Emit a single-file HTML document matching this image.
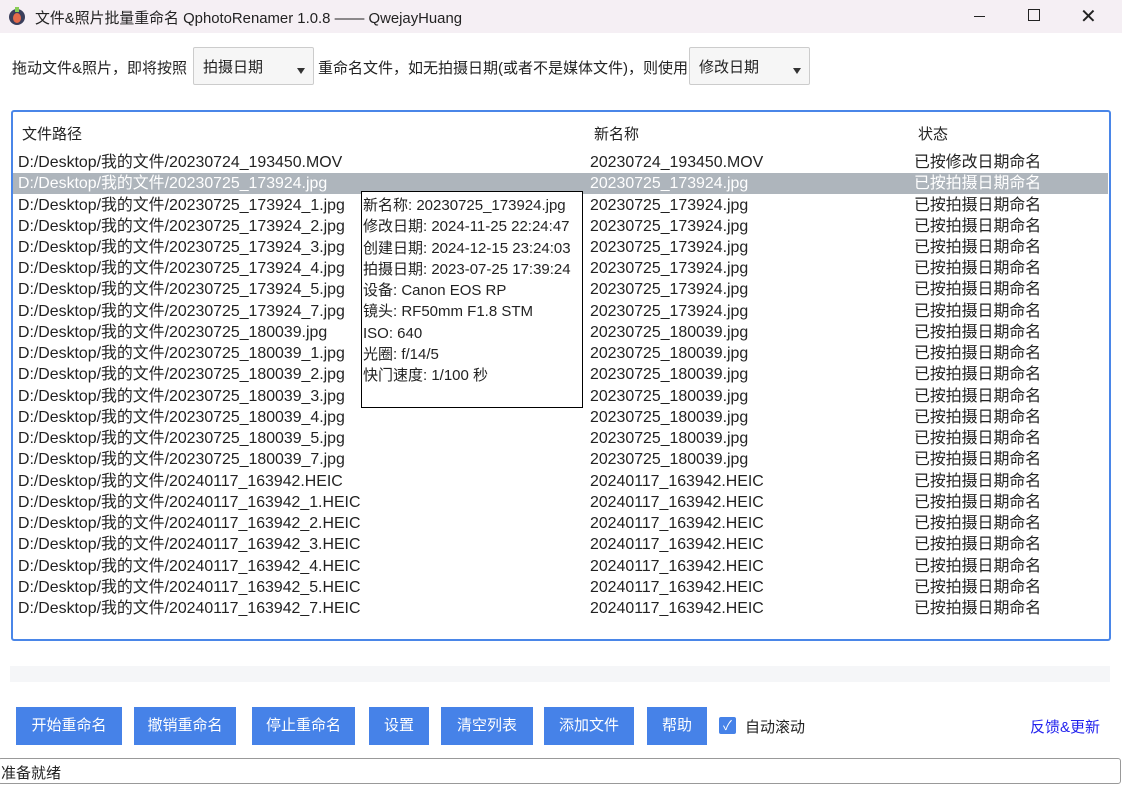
<!DOCTYPE html><html><head><meta charset="utf-8"><style>
*{margin:0;padding:0;box-sizing:border-box}
body{width:1122px;height:785px;background:#fff;font-family:"Liberation Sans","Noto Sans CJK SC",sans-serif;font-size:15px;color:#222;position:relative;overflow:hidden}
.a{position:absolute;white-space:nowrap}
.title{left:0;top:0;width:1122px;height:33px;background:#f5eff4}
.combo{position:absolute;height:38px;border:1px solid #ccc;border-radius:2px;background:#f6f6f6;padding:8px 9px;font-size:15px}
.combo:after{content:"";position:absolute;right:8px;bottom:10px;border:4px solid transparent;border-top:6px solid #333;border-bottom:0}
.table{left:11px;top:110px;width:1100px;height:531px;border:2px solid #4a86e8;border-radius:3px}
.row{position:absolute;left:13px;width:1095px;height:21px;line-height:21px;font-size:15.9px}
.row span{position:absolute}
.sel{background:#aeb5bc;color:#fff}
.tip{left:361px;top:191px;width:222px;height:217px;border:1px solid #000;background:#fff;padding:3px 1px;font-size:15px;line-height:21.3px}
.btn{position:absolute;top:707px;height:38px;background:#4682e8;color:#fff;font-size:15px;text-align:center;line-height:38px}
</style></head><body>
<div class="a title"></div>
<svg class="a" style="left:8px;top:6px" width="18" height="20"><ellipse cx="9" cy="11" rx="8" ry="8" fill="#3b3f5c"/><ellipse cx="9" cy="12" rx="4" ry="5" fill="#e46a4a"/><rect x="7" y="1" width="4" height="5" fill="#8c5"/></svg>
<div class="a" style="left:35px;top:7px;font-size:14.9px">文件&amp;照片批量重命名 QphotoRenamer 1.0.8 —— QwejayHuang</div>
<div class="a" style="left:974px;top:16px;width:11px;height:1px;background:#222"></div>
<div class="a" style="left:1028px;top:9px;width:12px;height:12px;border:1.5px solid #222"></div>
<div class="a" style="left:1080px;top:4px;font-size:20px;color:#222">✕</div>
<div class="a" style="left:12px;top:57px">拖动文件&amp;照片，即将按照</div>
<div class="combo" style="left:193px;top:47px;width:121px">拍摄日期</div>
<div class="a" style="left:318px;top:57px">重命名文件，如无拍摄日期(或者不是媒体文件)，则使用</div>
<div class="combo" style="left:689px;top:47px;width:121px">修改日期</div>
<div class="a table"></div>
<div class="a" style="left:22px;top:123px">文件路径</div>
<div class="a" style="left:594px;top:123px">新名称</div>
<div class="a" style="left:918px;top:123px">状态</div>
<div id="rows"></div>
<script>
var n=["20230724_193450.MOV","20230725_173924.jpg","20230725_173924_1.jpg","20230725_173924_2.jpg","20230725_173924_3.jpg","20230725_173924_4.jpg","20230725_173924_5.jpg","20230725_173924_7.jpg","20230725_180039.jpg","20230725_180039_1.jpg","20230725_180039_2.jpg","20230725_180039_3.jpg","20230725_180039_4.jpg","20230725_180039_5.jpg","20230725_180039_7.jpg","20240117_163942.HEIC","20240117_163942_1.HEIC","20240117_163942_2.HEIC","20240117_163942_3.HEIC","20240117_163942_4.HEIC","20240117_163942_5.HEIC","20240117_163942_7.HEIC"];
var h="";n.forEach(function(f,i){var t=(152+i*21.24).toFixed(1);var nn=f.replace(/_\d\./,".");if(i==0)nn=f;
h+='<div class="row'+(i==1?' sel':'')+'" style="top:'+t+'px"><span style="left:5px">D:/Desktop/我的文件/'+f+'</span><span style="left:577px">'+nn+'</span><span style="left:901px">'+(i==0?'已按修改日期命名':'已按拍摄日期命名')+'</span></div>';});
document.getElementById('rows').outerHTML=h;
</script>
<div class="a tip">新名称: 20230725_173924.jpg<br>修改日期: 2024-11-25 22:24:47<br>创建日期: 2024-12-15 23:24:03<br>拍摄日期: 2023-07-25 17:39:24<br>设备: Canon EOS RP<br>镜头: RF50mm F1.8 STM<br>ISO: 640<br>光圈: f/14/5<br>快门速度: 1/100 秒</div>
<div class="a" style="left:10px;top:666px;width:1100px;height:16px;background:#f5f6f8"></div>
<div class="btn" style="left:16px;width:106px">开始重命名</div>
<div class="btn" style="left:134px;width:102px">撤销重命名</div>
<div class="btn" style="left:252px;width:103px">停止重命名</div>
<div class="btn" style="left:369px;width:60px">设置</div>
<div class="btn" style="left:441px;width:92px">清空列表</div>
<div class="btn" style="left:544px;width:90px">添加文件</div>
<div class="btn" style="left:647px;width:60px">帮助</div>
<div class="a" style="left:719px;top:717px;width:17px;height:17px;background:#4682e8;border-radius:2px;color:#fff;font-size:13px;text-align:center;line-height:17px">✓</div>
<div class="a" style="left:745px;top:716px">自动滚动</div>
<div class="a" style="left:1030px;top:716px;color:#2222ee">反馈&amp;更新</div>
<div class="a" style="left:-2px;top:758px;width:1123px;height:26px;border:1px solid #999;border-radius:3px;background:#fff;padding:3px 2px;font-size:15px">准备就绪</div>
</body></html>
